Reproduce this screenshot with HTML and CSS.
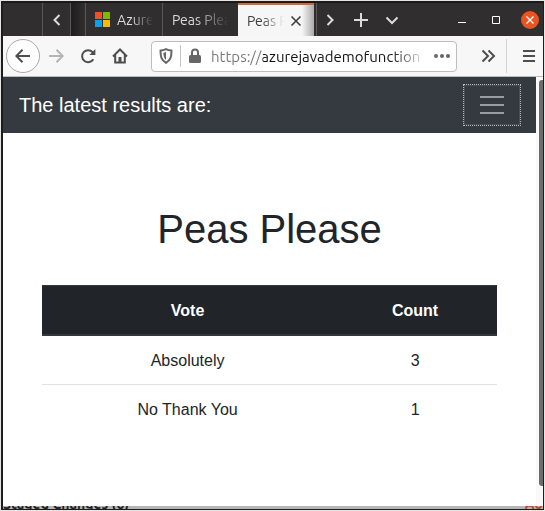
FILE: index.html
```html
<!DOCTYPE html>
<html lang="en">
<head>
    <meta charset="UTF-8">
    <meta name="viewport" content="width=device-width, initial-scale=1">
    <title>Peas Please</title>
    <link rel="stylesheet" href="styles.css">
</head>
<body>
<div class="window">
    <header class="titlebar">
        <div class="tab-stub"></div>
        <button class="tab-scroll" type="button" aria-label="Scroll tabs left">
            <svg width="16" height="16" viewBox="0 0 16 16"><path d="M10.5 3l-5 5 5 5"/></svg>
        </button>
        <div class="tab-shadow"></div>
        <button class="tab" type="button">
            <svg class="ms-logo" width="15" height="15" viewBox="0 0 15 15">
                <path fill="#f25022" d="M0 0h7v7H0z"/>
                <path fill="#7fba00" d="M8 0h7v7H8z"/>
                <path fill="#00a4ef" d="M0 8h7v7H0z"/>
                <path fill="#ffb900" d="M8 8h7v7H8z"/>
            </svg>
            <span class="tab-label">Azure</span>
        </button>
        <button class="tab" type="button"><span class="tab-label">Peas Please</span></button>
        <div class="tab active">
            <span class="tab-label">Peas Please</span>
            <button class="tab-close" type="button" aria-label="Close tab">
                <svg width="12" height="12" viewBox="0 0 12 12"><path stroke-width="1.6" d="M1.5 1.5l9 9M10.5 1.5l-9 9"/></svg>
            </button>
        </div>
        <div class="tab-tools">
            <button type="button" aria-label="Scroll tabs right">
                <svg width="16" height="16" viewBox="0 0 16 16"><path d="M5.5 3l5 5-5 5"/></svg>
            </button>
            <button type="button" aria-label="New tab">
                <svg width="16" height="16" viewBox="0 0 16 16"><path d="M8 1v14M1 8h14"/></svg>
            </button>
            <button type="button" aria-label="List all tabs">
                <svg width="16" height="16" viewBox="0 0 16 16"><path d="M2.5 5.5L8 11l5.5-5.5"/></svg>
            </button>
        </div>
        <div class="window-buttons">
            <button type="button" aria-label="Minimize">
                <svg width="18" height="18" viewBox="0 0 18 18"><path stroke-width="1" d="M5 11.5h8"/></svg>
            </button>
            <button type="button" aria-label="Maximize">
                <svg width="18" height="18" viewBox="0 0 18 18"><path stroke-width="1" d="M5.5 5.5h7v7h-7z"/></svg>
            </button>
            <button type="button" aria-label="Close">
                <svg width="18" height="18" viewBox="0 0 18 18">
                    <circle cx="9" cy="9" r="9" fill="#e95420" stroke="none"/>
                    <path stroke-width="1.3" d="M5.5 5.5l7 7M12.5 5.5l-7 7"/>
                </svg>
            </button>
        </div>
    </header>

    <div class="toolbar">
        <div class="nav-buttons">
            <button class="back" type="button" aria-label="Back">
                <svg width="16" height="16" viewBox="0 0 16 16"><path d="M15 8H1.5M7.5 1.8L1.3 8l6.2 6.2"/></svg>
            </button>
            <button type="button" aria-label="Forward" disabled>
                <svg width="16" height="16" viewBox="0 0 16 16"><path d="M1 8h13.5M8.5 1.8L14.7 8l-6.2 6.2"/></svg>
            </button>
            <button type="button" aria-label="Reload">
                <svg width="16" height="16" viewBox="0 0 16 16">
                    <path d="M13.3 11.2A6 6 0 1 1 12.6 4.2L14 5.6"/>
                    <path d="M15.4 1v6h-6z" fill="currentColor" stroke="none"/>
                </svg>
            </button>
            <button type="button" aria-label="Home">
                <svg width="16" height="16" viewBox="0 0 16 16">
                    <path d="M1 8.5l7-7 7 7M3.2 7v7.5h9.6V7"/>
                    <path d="M6.5 9h3v5h-3z" fill="currentColor" stroke="none"/>
                </svg>
            </button>
        </div>
        <div class="urlbar">
            <svg width="14" height="16" viewBox="0 0 14 16">
                <path d="M7 1.2c2 1 3.5 1.3 5.5 1.4 0 6-.7 9.4-5.5 12.2C2.2 12 1.5 8.6 1.5 2.6 3.5 2.5 5 2.2 7 1.2z"/>
                <path d="M7 4v8C4.8 10.3 4.500 7.8 4.4 4.8 5.4 4.7 6 4.5 7 4z" fill="currentColor" stroke="none"/>
            </svg>
            <span class="divider"></span>
            <svg width="14" height="16" viewBox="0 0 14 16">
                <path d="M4 8V4.5a3 3 0 0 1 6 0V8"/>
                <rect x="1" y="7" width="12" height="8" rx="1.5" fill="currentColor" stroke="none"/>
            </svg>
            <input class="url" type="text" aria-label="Address" value="https://azurejavademofunction">
            <button class="page-actions" type="button" aria-label="Page actions">
                <svg width="18" height="16" viewBox="0 0 18 16">
                    <g fill="currentColor" stroke="none">
                        <circle cx="3" cy="8" r="2"/>
                        <circle cx="9" cy="8" r="2"/>
                        <circle cx="15" cy="8" r="2"/>
                    </g>
                </svg>
            </button>
        </div>
        <button class="overflow" type="button" aria-label="More tools">
            <svg width="16" height="16" viewBox="0 0 16 16"><path d="M2.5 2.5L8 8l-5.5 5.5M8.5 2.5L14 8l-5.5 5.5"/></svg>
        </button>
        <button class="menu" type="button" aria-label="Open menu">
            <svg width="14" height="16" viewBox="0 0 14 16"><path d="M1 3h12M1 8h12M1 13h12"/></svg>
        </button>
    </div>

    <div class="viewport">
        <div class="page">
            <nav class="navbar">
                <a class="navbar-brand" href="#">The latest results are:</a>
                <button class="navbar-toggler" type="button" aria-label="Toggle navigation">
                    <svg width="30" height="30" viewBox="0 0 30 30"><path d="M3 7h24M3 15h24M3 23h24"/></svg>
                </button>
            </nav>
            <main class="content">
                <h1>Peas Please</h1>
                <table class="results">
                    <thead>
                    <tr>
                        <th class="vote" scope="col">Vote</th>
                        <th scope="col">Count</th>
                    </tr>
                    </thead>
                    <tbody>
                    <tr>
                        <td>Absolutely</td>
                        <td>3</td>
                    </tr>
                    <tr>
                        <td>No Thank You</td>
                        <td>1</td>
                    </tr>
                    </tbody>
                </table>
            </main>
        </div>
        <div class="scrollbar"><div class="thumb"></div></div>
    </div>

    <!-- sliver of the window behind -->
    <div class="behind">
        <span>Staged Changes (6)</span>
        <span class="behind-right">Ao</span>
    </div>
</div>
</body>
</html>
```
FILE: styles.css
```css
* {
    box-sizing: border-box;
}

body {
    margin: 0;
    padding: 1px;
    background: #e4e4e4;
    font-family: "Liberation Sans", Arial, sans-serif;
    font-size: 16px;
    line-height: 24px;
    color: #212529;
}

button {
    display: flex;
    align-items: center;
    justify-content: center;
    flex: none;
    padding: 0;
    border: 0;
    background: none;
    color: inherit;
    font: inherit;
}

svg {
    display: block;
    flex: none;
    fill: none;
    stroke: currentColor;
    stroke-width: 2;
}

.window {
    display: flex;
    flex-direction: column;
    min-height: calc(100vh - 2px);
    border: 1px solid #1d1d1d;
    border-left-width: 2px;
    background: #fff;
}

/* title bar */
.titlebar {
    display: flex;
    height: 34px;
    background: #302e2f;
    color: #dcdcdc;
    font-family: Ubuntu, "Noto Sans", sans-serif;
    font-size: 14px;
    border-top: 1px solid #181818;
}

.tab-stub {
    width: 40px;
    border-right: 1px solid #5a5859;
}

.tab-scroll {
    width: 28px;
    border-right: 1px solid #5a5859;
}

.tab-shadow {
    width: 15px;
    border-right: 1px solid #5a5859;
    background: linear-gradient(to right, #1f1d1e, #302e2f);
}

.tab {
    display: flex;
    align-items: center;
    justify-content: flex-start;
    gap: 7px;
    width: 76px;
    padding: 0 9px;
    flex: none;
}

.tab + .tab {
    border-left: 1px solid #5a5859;
}

.ms-logo {
    stroke: none;
}

.tab-label {
    flex: 1;
    min-width: 0;
    overflow: hidden;
    white-space: nowrap;
    text-align: left;
    -webkit-mask-image: linear-gradient(to right, #000 40%, transparent);
    mask-image: linear-gradient(to right, #000 40%, transparent);
}

.tab + .tab.active {
    gap: 6px;
    border-left: 0;
    border-top: 2px solid #d0693c;
    background: linear-gradient(to right, #f6f6f6 84%, #aaa);
    color: #3c3c3c;
}

.tab-close {
    margin-right: 3px;
}

.tab-tools {
    display: flex;
    gap: 15px;
    margin-left: 2px;
    padding-left: 5px;
    border-left: 1px solid #5a5859;
}

.window-buttons {
    display: flex;
    gap: 16px;
    margin-left: auto;
    padding-right: 4px;
    color: #fff;
}

/* toolbar */
.toolbar {
    display: flex;
    align-items: center;
    height: 41px;
    padding: 0 7px 0 3px;
    border-bottom: 1px solid #bcbcbc;
    background: #f7f7f7;
    color: #4e4e4e;
}

.nav-buttons {
    display: flex;
}

.nav-buttons button {
    width: 32px;
    height: 34px;
}

.nav-buttons .back {
    width: 34px;
    border: 1px solid #aaa;
    border-radius: 50%;
    background: #fff;
}

.nav-buttons button:disabled {
    color: #b4b4b4;
}

.urlbar {
    display: flex;
    align-items: center;
    gap: 7px;
    flex: 1;
    min-width: 0;
    height: 31px;
    margin-left: 15px;
    padding: 0 5px 0 7px;
    border: 1px solid #bdbdbd;
    border-radius: 4px;
    background: #fff;
    color: #666;
}

.divider {
    width: 1px;
    height: 22px;
    background: #c4c4c4;
}

/* scheme in grey, host in black, faded where it runs out */
.url {
    flex: 1;
    min-width: 0;
    padding: 0 0 0 2px;
    border: 0;
    outline: 0;
    font-family: Ubuntu, "Noto Sans", sans-serif;
    font-size: 15px;
    background: linear-gradient(to right, #777 54px, #111 54px, #111 84%, transparent);
    -webkit-background-clip: text;
    background-clip: text;
    color: transparent;
}

.overflow {
    width: 50px;
    height: 34px;
    padding-left: 12px;
    border-right: 1px solid #d2d2d2;
}

.menu {
    margin-left: 15px;
}

/* page area */
.viewport {
    display: flex;
    flex: 1;
}

.page {
    flex: 1;
    min-width: 0;
}

.scrollbar {
    width: 7px;
    padding: 3px 0 20px 3px;
    background: #f9f9f9;
}

.thumb {
    height: 100%;
    border-radius: 3px 0 0 3px;
    background: #6c6c6c;
}

.navbar {
    display: flex;
    align-items: center;
    justify-content: space-between;
    padding: 8px 16px;
    background: #343a40;
}

.navbar-brand {
    color: #fff;
    font-size: 20px;
    text-decoration: none;
}

.navbar-toggler {
    padding: 4px 12px;
    border: 1px solid rgba(255, 255, 255, 0.1);
    outline: 1px dotted #b9bcbf;
    color: rgba(255, 255, 255, 0.5);
}

.content {
    padding: 72px 39px 48px;
    text-align: center;
}

h1 {
    margin: 0 0 32px;
    font-size: 40px;
    font-weight: 500;
    line-height: 48px;
}

.results {
    width: 100%;
    border-collapse: collapse;
}

.results th,
.results td {
    padding: 13px 12px 11px;
    border-top: 1px solid #dee2e6;
}

.results thead th {
    border-top-color: #32383e;
    border-bottom: 2px solid #32383e;
    background: #212529;
    color: #fff;
}

.results .vote {
    width: 64%;
}

.behind {
    display: flex;
    align-items: flex-end;
    justify-content: space-between;
    height: 3px;
    overflow: hidden;
    background: #b5b5b5;
    color: #222;
    font-family: Ubuntu, "Noto Sans", sans-serif;
    font-size: 14px;
    font-weight: bold;
    line-height: 10px;
}

.behind-right {
    color: #c4431f;
}
```
